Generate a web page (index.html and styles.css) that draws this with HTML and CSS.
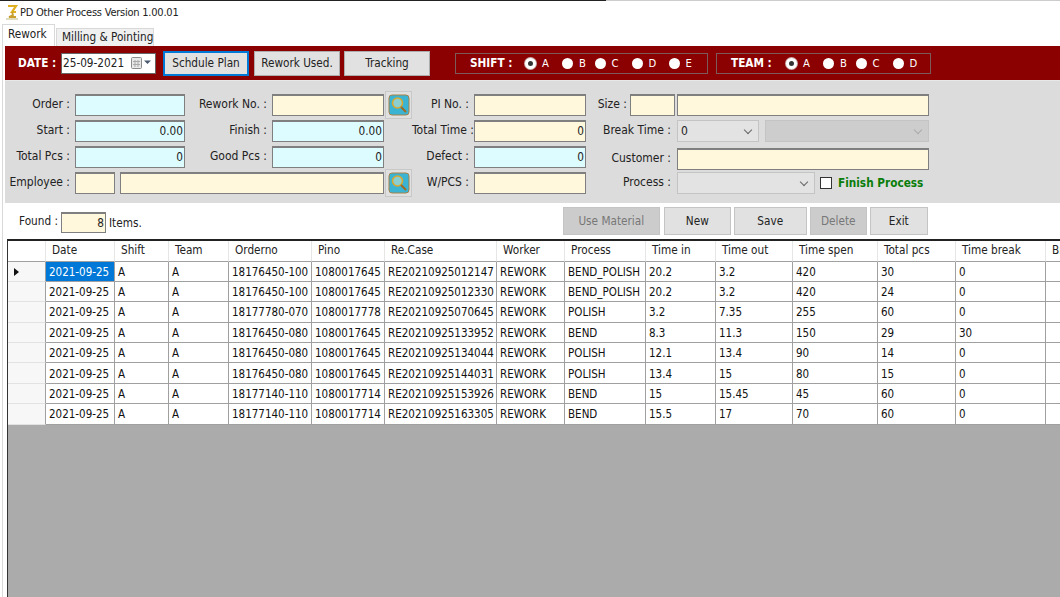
FILE: index.html
```html
<!DOCTYPE html>
<html lang="en">
  <head>
    <meta charset="utf-8" />
    <title>PD Other Process Version 1.00.01</title>
    <link rel="stylesheet" href="styles.css">
  </head>

  <body>
    <div class="titlebar">
      <svg class="app-icon" width="14" height="16" viewBox="0 0 14 16">
        <path d="M3 2h8l-4 6h4" fill="none" stroke="#e0b020" stroke-width="2.2" />
        <path d="M7 8l1 3-4 2h7" fill="none" stroke="#c9a030" stroke-width="1.8" />
        <path d="M1 15h12" stroke="#d8d0a8" stroke-width="1.5" />
      </svg>
      <span class="title-text">PD Other Process Version 1.00.01</span>
    </div>

    <div class="tabs">
      <div class="tab tab-active">Rework</div>
      <div class="tab">Milling &amp; Pointing</div>
    </div>

    <div class="page">
      <div class="toolbar">
        <span class="date-label">DATE :</span>
        <div class="date-input">
          <span>25-09-2021</span>
          <svg class="date-icon" width="21" height="12" viewBox="0 0 21 12">
            <rect x="0.5" y="0.5" width="10" height="11" rx="1" fill="#e8e8e8" stroke="#8c8c8c" />
            <path d="M2 4.5h7M2 7.5h7M4 3v7M7 3v7" stroke="#aaa" />
            <path d="M13 3.500h7l-3.500 3.500z" fill="#4a5a70" />
          </svg>
        </div>
        <button class="btn btn-tool btn-focus">Schdule Plan</button>
        <button class="btn btn-tool btn-used">Rework Used.</button>
        <button class="btn btn-tool">Tracking</button>

        <div class="group group-shift">
          <span class="group-title">SHIFT :</span>
          <span class="radio radio-checked"><i></i>A</span>
          <span class="radio radio-narrow"><i></i>B</span>
          <span class="radio"><i></i>C</span>
          <span class="radio"><i></i>D</span>
          <span class="radio"><i></i>E</span>
        </div>
        <div class="group group-team">
          <span class="group-title">TEAM :</span>
          <span class="radio radio-checked"><i></i>A</span>
          <span class="radio radio-narrow"><i></i>B</span>
          <span class="radio"><i></i>C</span>
          <span class="radio"><i></i>D</span>
        </div>
      </div>

      <div class="form">
        <label>Order :</label>
        <div class="field cyan"></div>
        <label>Rework No. :</label>
        <div class="field cream"></div>
        <button class="search">
          <svg width="22" height="22" viewBox="0 0 22 22">
            <rect x="1" y="1" width="20" height="20" rx="3" fill="#3bb3d3" stroke="#a5824a" />
            <circle cx="9.500" cy="9" r="5" fill="#8ccfd0" stroke="#d8a830" stroke-width="1.600" />
            <path d="M13 13l5 5" stroke="#a06a20" stroke-width="2" />
          </svg>
        </button>
        <label>PI No. :</label>
        <div class="field cream"></div>
        <label class="label-size">Size :</label>
        <div class="field cream field-size"></div>
        <div class="field cream"></div>

        <label>Start :</label>
        <div class="field cyan">0.00</div>
        <label>Finish :</label>
        <div class="field cyan">0.00</div>
        <span></span>
        <label>Total Time :</label>
        <div class="field cream">0</div>
        <label class="span-two">Break Time :</label>
        <div class="inline-fields">
          <div class="select select-break">0<b></b></div>
          <div class="select select-off"><b></b></div>
        </div>

        <label>Total Pcs :</label>
        <div class="field cyan">0</div>
        <label>Good Pcs :</label>
        <div class="field cyan">0</div>
        <span></span>
        <label>Defect :</label>
        <div class="field cyan">0</div>
        <label class="span-two customer">Customer :</label>
        <div class="field cream customer"></div>

        <label>Employee :</label>
        <div class="inline-fields span-three">
          <div class="field cream field-emp"></div>
          <div class="field cream field-grow"></div>
        </div>
        <button class="search">
          <svg width="22" height="22" viewBox="0 0 22 22">
            <rect x="1" y="1" width="20" height="20" rx="3" fill="#3bb3d3" stroke="#a5824a" />
            <circle cx="9.500" cy="9" r="5" fill="#8ccfd0" stroke="#d8a830" stroke-width="1.600" />
            <path d="M13 13l5 5" stroke="#a06a20" stroke-width="2" />
          </svg>
        </button>
        <label>W/PCS :</label>
        <div class="field cream"></div>
        <label class="span-two">Process :</label>
        <div class="inline-fields">
          <div class="select select-process"><b></b></div>
          <span class="checkbox"></span>
          <span class="finish">Finish Process</span>
        </div>
      </div>

      <div class="actions">
        <span class="found-label">Found :</span>
        <div class="field cream field-found">8</div>
        <span class="found-items">Items.</span>
        <div class="action-buttons">
          <button class="btn btn-material" disabled>Use Material</button>
          <button class="btn btn-new">New</button>
          <button class="btn btn-save">Save</button>
          <button class="btn btn-delete" disabled>Delete</button>
          <button class="btn btn-exit">Exit</button>
        </div>
      </div>

      <div class="grid">
        <table>
          <thead>
            <tr><th></th><th>Date</th><th>Shift</th><th>Team</th><th>Orderno</th><th>Pino</th><th>Re.Case</th><th>Worker</th><th>Process</th><th>Time in</th><th>Time out</th><th>Time spen</th><th>Total pcs</th><th>Time break</th><th>Break</th></tr>
          </thead>
          <tbody>
            <tr><th class="current"><i></i></th><td class="selected">2021-09-25</td><td>A</td><td>A</td><td>18176450-100</td><td>1080017645</td><td>RE20210925012147</td><td>REWORK</td><td>BEND_POLISH</td><td>20.2</td><td>3.2</td><td>420</td><td>30</td><td>0</td><td></td></tr>
            <tr><th></th><td>2021-09-25</td><td>A</td><td>A</td><td>18176450-100</td><td>1080017645</td><td>RE20210925012330</td><td>REWORK</td><td>BEND_POLISH</td><td>20.2</td><td>3.2</td><td>420</td><td>24</td><td>0</td><td></td></tr>
            <tr><th></th><td>2021-09-25</td><td>A</td><td>A</td><td>18177780-070</td><td>1080017778</td><td>RE20210925070645</td><td>REWORK</td><td>POLISH</td><td>3.2</td><td>7.35</td><td>255</td><td>60</td><td>0</td><td></td></tr>
            <tr><th></th><td>2021-09-25</td><td>A</td><td>A</td><td>18176450-080</td><td>1080017645</td><td>RE20210925133952</td><td>REWORK</td><td>BEND</td><td>8.3</td><td>11.3</td><td>150</td><td>29</td><td>30</td><td></td></tr>
            <tr><th></th><td>2021-09-25</td><td>A</td><td>A</td><td>18176450-080</td><td>1080017645</td><td>RE20210925134044</td><td>REWORK</td><td>POLISH</td><td>12.1</td><td>13.4</td><td>90</td><td>14</td><td>0</td><td></td></tr>
            <tr><th></th><td>2021-09-25</td><td>A</td><td>A</td><td>18176450-080</td><td>1080017645</td><td>RE20210925144031</td><td>REWORK</td><td>POLISH</td><td>13.4</td><td>15</td><td>80</td><td>15</td><td>0</td><td></td></tr>
            <tr><th></th><td>2021-09-25</td><td>A</td><td>A</td><td>18177140-110</td><td>1080017714</td><td>RE20210925153926</td><td>REWORK</td><td>BEND</td><td>15</td><td>15.45</td><td>45</td><td>60</td><td>0</td><td></td></tr>
            <tr><th></th><td>2021-09-25</td><td>A</td><td>A</td><td>18177140-110</td><td>1080017714</td><td>RE20210925163305</td><td>REWORK</td><td>BEND</td><td>15.5</td><td>17</td><td>70</td><td>60</td><td>0</td><td></td></tr>
          </tbody>
        </table>
      </div>
    </div>
  </body>
</html>
```

FILE: styles.css
```css
html,
body {
  height: 100%;
}

body {
  margin: 0;
  width: 1060px;
  height: 597px;
  overflow: hidden;
  display: flex;
  flex-direction: column;
  background: #fff;
  color: #222;
  font-family: "DejaVu Sans", "Noto Sans", sans-serif;
  font-stretch: condensed;
  font-size: 11.7px;
}

button {
  font: inherit;
}

/* Title bar and tabs */

.titlebar {
  height: 23px;
  flex: none;
  box-sizing: border-box;
  padding-left: 5px;
  display: flex;
  align-items: center;
  gap: 1px;
  border-top: 1px solid;
  border-image: linear-gradient(to right, #222 606px, #ccc 606px) 1;
}

.app-icon {
  flex: none;
}

.title-text {
  font-size: 11px;
  letter-spacing: -0.23px;
}

.tabs {
  height: 23px;
  flex: none;
  display: flex;
  align-items: flex-end;
  padding-left: 2px;
}

.tab {
  height: 18px;
  padding: 0 3px 0 5px;
  box-sizing: border-box;
  border: 1px solid #d9d9d9;
  border-bottom: 0;
  background: #f0f0f0;
  margin-left: 1px;
  width: 98px;
  line-height: 17px;
  white-space: nowrap;
}

.tab-active {
  width: 53px;
  height: 22px;
  margin-left: 0;
  padding-left: 5px;
  background: #fff;
  line-height: 18px;
}

.page {
  flex: 1;
  min-height: 0;
  margin-left: 2px;
  border-left: 1px solid #d9d9d9;
  padding-left: 2px;
  display: flex;
  flex-direction: column;
}

/* Red toolbar */

.toolbar {
  height: 34px;
  flex: none;
  display: flex;
  align-items: center;
  background: #8b0000;
  border-bottom: 1px solid #e8e8e8;
  color: #fff;
}

.date-label {
  margin-left: 13px;
  width: 43px;
  font-weight: bold;
}

.date-input {
  width: 95px;
  height: 21px;
  box-sizing: border-box;
  display: flex;
  align-items: center;
  justify-content: space-between;
  padding-left: 1px;
  background: #fff;
  color: #222;
  border: 1px solid #666;
}

.date-icon {
  margin-right: 3px;
}

.btn {
  height: 25px;
  padding: 0;
  box-sizing: border-box;
  border: 1px solid #adadad;
  background: #e1e1e1;
  color: #222;
}

.btn-tool {
  width: 86px;
  margin-left: 4px;
}

.btn-focus {
  margin-left: 7px;
  border: 2px solid #0078d7;
}

.btn-used {
  margin-left: 5px;
}

.group {
  height: 21px;
  box-sizing: border-box;
  display: flex;
  align-items: center;
  padding-left: 14px;
  border: 1px solid #7d5a5a;
}

.group-shift {
  width: 253px;
  margin-left: 25px;
}

.group-team {
  width: 215px;
  margin-left: 8px;
}

.group-title {
  width: 55px;
  font-weight: bold;
}

.radio {
  width: 37px;
  display: flex;
  align-items: center;
  gap: 6px;
  font-size: 11.2px;
}

.radio-narrow {
  width: 32.5px;
}

.radio i {
  width: 11px;
  height: 11px;
  border-radius: 50%;
  background: #fff;
  box-sizing: border-box;
}

.radio-checked i {
  border: 3px solid #fff;
  background: #333;
  box-shadow: 0 0 0 1px #c8a8a8;
}

/* Entry form */

.form {
  height: 122px;
  flex: none;
  box-sizing: border-box;
  padding-top: 13px;
  background: #dcdcdc;
  display: grid;
  grid-template-columns: 70px 110px 87px 112px 28px 62px 112px 44px 47px 252px;
  grid-auto-rows: 22px;
  row-gap: 4px;
  font-size: 12px;
}

.form label {
  padding-right: 5px;
  text-align: right;
  line-height: 21px;
  white-space: nowrap;
}

.form .label-size {
  padding-right: 3px;
}

.form .span-two {
  padding-right: 6px;
}

.span-two {
  grid-column: span 2;
}

.span-three {
  grid-column: span 3;
}

.customer {
  margin-top: 2px;
}

.field {
  height: 22px;
  box-sizing: border-box;
  padding-right: 1px;
  text-align: right;
  font-size: 11.7px;
  line-height: 19px;
  border: 1px solid #7f7f7f;
  border-top-width: 2px;
}

.cyan {
  background: #ddfcff;
}

.cream {
  background: #fff8dc;
}

.inline-fields {
  display: flex;
  align-items: center;
}

.field-size {
  margin-right: 2px;
}

.field-emp {
  width: 40px;
  margin-right: 5px;
}

.field-grow {
  flex: 1;
}

.search {
  width: 27px;
  height: 28px;
  margin: -3px 0 0 1px;
  padding: 0;
  display: flex;
  align-items: center;
  justify-content: center;
  background: #e0e0e0;
  border: 1px solid #c8c8c8;
}

.select {
  height: 22px;
  box-sizing: border-box;
  display: flex;
  align-items: center;
  justify-content: space-between;
  padding: 0 7px 0 3px;
  background: #e3e3e3;
  border: 1px solid #c4c4c4;
}

.select b {
  margin-left: auto;
  width: 5px;
  height: 5px;
  margin-top: -3px;
  transform: rotate(45deg);
  border-right: 1px solid #666;
  border-bottom: 1px solid #666;
}

.select-break {
  width: 82px;
  margin-right: 6px;
}

.select-off {
  width: 164px;
  background: #cdcdcd;
}

.select-off b {
  border-color: #aaa;
}

.select-process {
  width: 138px;
}

.checkbox {
  width: 12px;
  height: 12px;
  margin-left: 5px;
  box-sizing: border-box;
  background: #fff;
  border: 1px solid #333;
}

.finish {
  margin-left: 6px;
  color: #0a7d0a;
  font-size: 11.7px;
  font-weight: bold;
  white-space: nowrap;
}

/* Found counter and action buttons */

.actions {
  height: 36px;
  flex: none;
  display: flex;
  align-items: center;
}

.found-label {
  margin-left: 14px;
  width: 42px;
}

.field-found {
  width: 45px;
  height: 21px;
  margin-top: 2px;
}

.found-items {
  margin-left: 3px;
  margin-top: 3px;
}

.action-buttons {
  display: flex;
  gap: 3px;
  margin-left: 421px;
}

.action-buttons .btn {
  height: 28px;
  border-color: #c4c4c4;
}

.action-buttons .btn:disabled {
  background: #ccc;
  color: #777;
}

.btn-material {
  width: 97px;
}

.action-buttons .btn-new {
  width: 67px;
  margin-left: 1px;
}

.btn-save {
  width: 73px;
}

.btn-delete {
  width: 57px;
}

.btn-exit {
  width: 58px;
}

/* Data grid */

.grid {
  flex: 1;
  min-height: 0;
  margin-left: 2px;
  overflow: hidden;
  background: #ababab;
  border-top: 2px solid #222;
  border-left: 1px solid #333;
}

table {
  width: 1152px;
  table-layout: fixed;
  border-collapse: separate;
  border-spacing: 0;
  background: #fff;
  color: #111;
  font-size: 11.5px;
}

th,
td {
  height: 20.4px;
  box-sizing: border-box;
  padding: 1px 0 0 3px;
  font-weight: normal;
  text-align: left;
  white-space: nowrap;
  overflow: hidden;
  border-right: 1px solid #a0a0a0;
  border-bottom: 1px solid #a0a0a0;
}

thead th {
  height: 20.5px;
  padding: 0 0 1px 6px;
  color: #222;
  font-size: 11.7px;
  border-right: 1px solid #e6e6e6;
  border-bottom: 1px solid #a0a0a0;
}

tbody th {
  background: #f7f7f7;
  border-right: 1px solid #a0a0a0;
  border-bottom: 1px solid #e2e2e2;
}

th:nth-child(1) { width: 38px; }
th:nth-child(2) { width: 69px; }
th:nth-child(3) { width: 54px; }
th:nth-child(4) { width: 60px; }
th:nth-child(5) { width: 83px; }
th:nth-child(6) { width: 73px; }
th:nth-child(7) { width: 112px; }
th:nth-child(8) { width: 68px; }
th:nth-child(9) { width: 81px; }
th:nth-child(10) { width: 70px; }
th:nth-child(11) { width: 77px; }
th:nth-child(12) { width: 85px; }
th:nth-child(13) { width: 78px; }
th:nth-child(14) { width: 90px; }
th:nth-child(15) { width: 114px; }

.current i {
  display: block;
  width: 0;
  height: 0;
  margin-left: 3px;
  border-left: 5px solid #111;
  border-top: 4.5px solid transparent;
  border-bottom: 4.5px solid transparent;
}

.selected {
  background: #0078d7;
  color: #fff;
}
```
